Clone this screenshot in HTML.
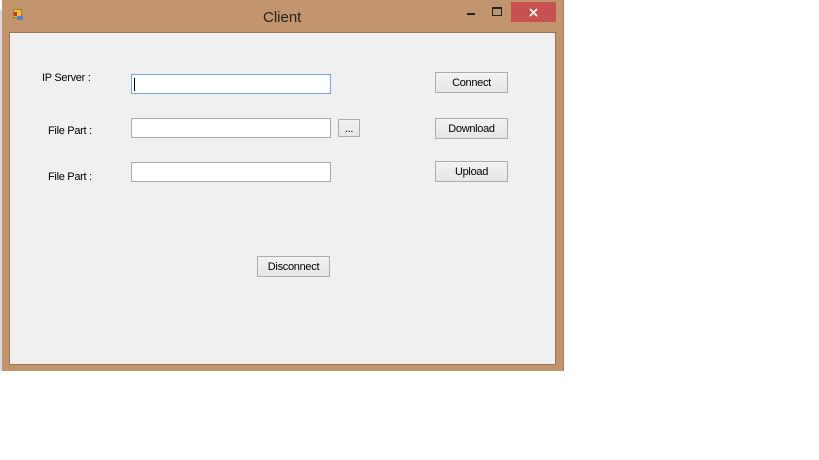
<!DOCTYPE html>
<html><head><style>
body{margin:0;width:819px;height:460px;background:#fff;position:relative;overflow:hidden;font-family:"Liberation Sans",sans-serif;font-size:11px;color:#000}
.a{position:absolute}
.win{left:2px;top:0;width:561px;height:371px;background:#c1946d;border-right:1px solid #a7805e}
.client{left:9px;top:32px;width:545px;height:331px;background:#f0f0f0;border:1px solid #9a7350}
.tb{background:#fff;border:1px solid #ababab;width:198px;height:18px}
.btn{background:linear-gradient(#f2f2f2,#e6e6e6);border:1px solid #acacac;width:71px;height:19px;text-align:center;line-height:21px;font-size:11px;letter-spacing:-0.3px}
</style></head><body>
<div class="a" style="left:0;top:10px;width:3px;height:360px;background:#d8d8d8"></div>
<div class="a win"></div>
<div class="a" style="left:13px;top:9px;width:7px;height:7px;background:#e8c030;border:1px solid #a08020"></div>
<div class="a" style="left:14px;top:12px;width:3px;height:4px;background:#d03030"></div>
<div class="a" style="left:17px;top:16px;width:6px;height:4px;background:#5080c8"></div>
<div class="a" style="left:263px;top:9px;font-size:15px;color:#222">Client</div>
<div class="a" style="left:467px;top:13px;width:8px;height:2px;background:#222"></div>
<div class="a" style="left:492px;top:7px;width:8px;height:6px;border:1px solid #222;border-top-width:2px"></div>
<div class="a" style="left:511px;top:2px;width:45px;height:20px;background:#c75050"></div>
<svg class="a" style="left:529px;top:8px" width="9" height="9"><path d="M1 1L8 8M8 1L1 8" stroke="#fff" stroke-width="1.6"/></svg>
<div class="a client"></div>
<div class="a" style="left:42px;top:72px;letter-spacing:-0.3px">IP Server :</div>
<div class="a" style="left:48px;top:125px;letter-spacing:-0.3px">File Part :</div>
<div class="a" style="left:48px;top:171px;letter-spacing:-0.3px">File Part :</div>
<div class="a tb" style="left:131px;top:74px;border-color:#7aa7d8"><div class="a" style="left:2px;top:3px;width:1px;height:13px;background:#000"></div></div>
<div class="a tb" style="left:131px;top:118px"></div>
<div class="a tb" style="left:131px;top:162px"></div>
<div class="a btn" style="left:338px;top:119px;width:20px;height:16px;line-height:18px">...</div>
<div class="a btn" style="left:435px;top:72px">Connect</div>
<div class="a btn" style="left:435px;top:118px">Download</div>
<div class="a btn" style="left:435px;top:161px">Upload</div>
<div class="a btn" style="left:257px;top:256px">Disconnect</div>
</body></html>
